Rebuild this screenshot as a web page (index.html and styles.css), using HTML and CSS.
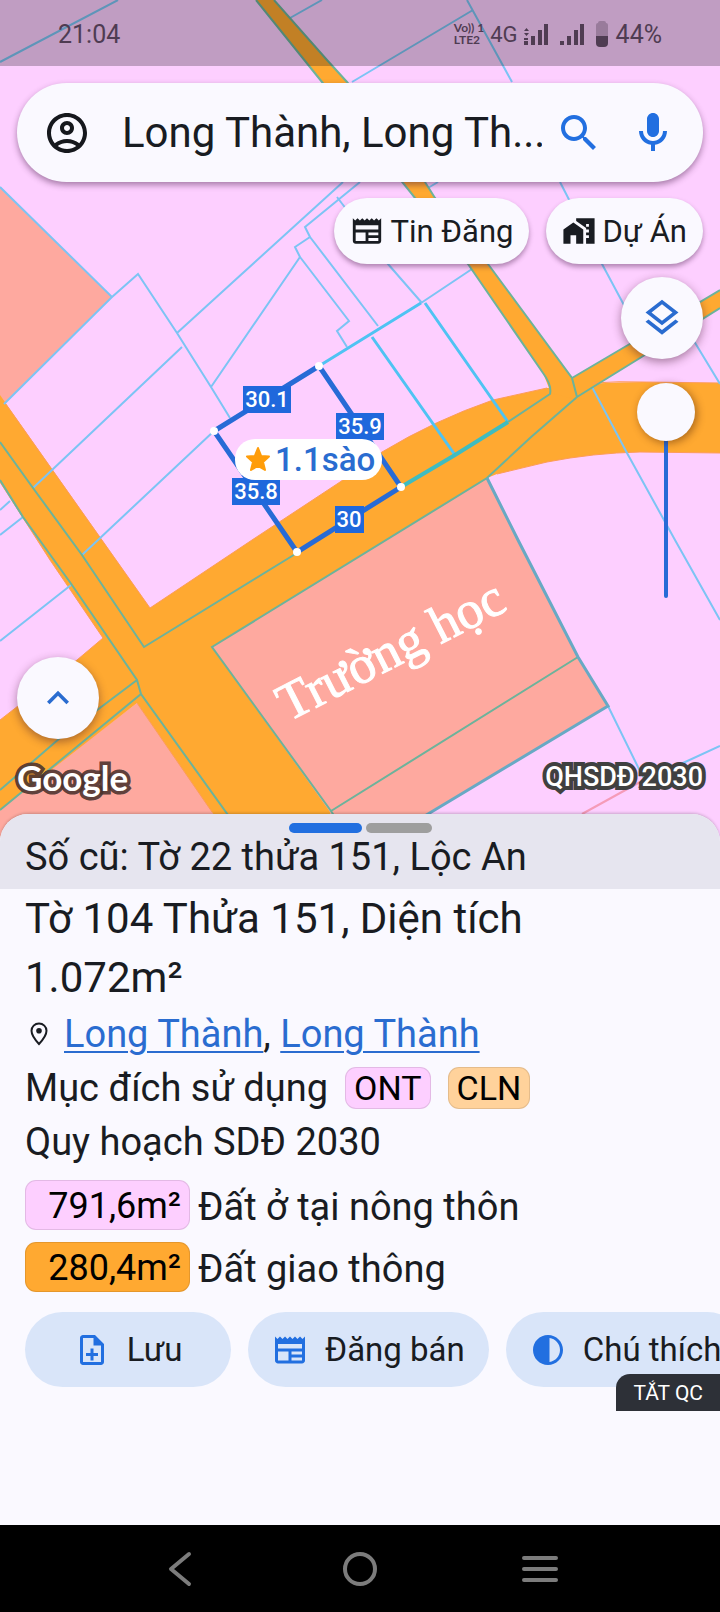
FILE: index.html
```html
<!DOCTYPE html>
<html lang="vi">
<head>
<meta charset="utf-8">
<meta name="viewport" content="width=device-width, initial-scale=1">
<title>Bản đồ quy hoạch</title>
<link rel="stylesheet" href="styles.css">
</head>
<body>
<div class="screen">
  <main class="map">
    <svg class="map-canvas" viewBox="0 0 720 840" preserveAspectRatio="xMidYMin slice" role="img" aria-label="Bản đồ thửa đất">
      <rect class="land" width="720" height="840"/>
      <!-- public land -->
      <path class="public" d="M0 187L112 297L4 404L0 408ZM487 478L212 647L330 814L330 840H380L428 814L608 706L578 657L518 540ZM0 808L137 703L232 840H0Z"/>
      <!-- roads -->
      <path class="road" d="M0 395L150 608L252 540L340 482L382 452Q435 420 493 400L547 388Q593 382 643 382L720 383V453L640 452Q593 453 547 462L497 474L487 478L212 647L330 812V840H230L212 812L137 703L0 810V720L77 660L103 638L50 560L0 482Z"/>
      <path class="road" d="M256 0L322 82L468 264L543 373L551 393L577 400L593 387L640 358L720 308V290L628 345L572 378L488 264L435 198L425 182L347 82L327 60L274 0Z"/>
      <path class="road-edge" d="M5 403L150 608L252 540L340 482L382 452Q435 420 493 400L547 388M593 383Q620 381 643 382L720 383M720 453L640 452Q593 453 547 462L497 474M0 482L50 560L103 638L77 660L0 720M137 703L212 812"/>
      <path class="zone-edge" d="M582 814L640 782"/>
      <!-- parcel boundaries on land -->
      <path class="line" d="M0 62L118 0M290 18L322 0M352 82L473 10M467 0L512 82M560 182L602 264L640 335M680 318L720 384M428 188L438 182"/>
      <path class="line" d="M0 187L112 297L4 404M112 297L138 274L177 333L211 387L230 418M177 333L233 282L343 182M360 182L305 227L310 237L295 247L300 257L211 387M300 257L349 321L337 331L347 347M310 237L378 326M337 197L388 264L422 303M33 488L182 347M82 555L214 431M0 510L10 501M0 535L23 517M0 641L71 585M421 303L472 269"/>
      <path class="line" d="M592 387L627 453L675 540L720 620M608 706L638 767L645 780M645 780L683 763L720 746"/>
      <path class="line bright" d="M319 366L421 303M372 337L455 455M425 303L508 422"/>
      <!-- boundaries over roads -->
      <path class="line teal" d="M256 0L322 82L468 264L543 373Q552 385 550 394L508 422M274 0L327 60L347 82L425 182L435 198L488 264L572 378L577 397M572 378L628 345L720 290M720 308L640 358L593 387L577 397L530 438L487 478L212 647L331 811L578 657M331 811L350 840"/>
      <path class="line steel" d="M487 478L518 540L578 657L608 706L428 814L384 840"/>
      <path class="line teal" d="M0 442L33 488L82 555L144 647L297 553M0 480L23 517L72 585L137 680L141 694L246 840M137 680L60 738L0 790M141 694L0 810"/>
      <path class="line teal thick" d="M401 487L455 455L508 422"/>
      <!-- selected parcel -->
      <path class="parcel" d="M319 366L401 487L297 552L214 431Z"/>
      <g class="node"><circle cx="319" cy="366" r="4"/><circle cx="401" cy="487" r="4"/><circle cx="297" cy="552" r="4"/><circle cx="214" cy="431" r="4"/></g>
      <g class="tag-box"><rect x="243" y="386" width="48" height="27"/><rect x="336" y="413" width="48" height="27"/><rect x="232" y="478" width="48" height="27"/><rect x="335" y="506" width="29" height="27"/></g>
      <g class="tag-text"><text x="267" y="407">30.1</text><text x="360" y="434">35.9</text><text x="256" y="499">35.8</text><text x="349" y="527">30</text></g>
      <rect class="pill" x="235" y="439" width="147" height="41" rx="20"/>
      <path class="star" d="M258 448L261.200 456L269 456.500L263 462L265 470L258 465.800L251 470L253 462L247 456.500L254.800 456Z"/>
      <text class="pill-text" x="275" y="471">1.1sào</text>
      <text class="place" transform="translate(288 722) rotate(-27)">Trường học</text>
    </svg>

    <header class="status">
      <span class="clock">21:04</span>
      <span class="volte"><span>Vo)) 1</span><span>LTE2</span></span>
      <span class="net">4G</span>
      <svg class="signal" viewBox="0 0 24 22" aria-hidden="true"><path d="M0 8L2.500 5L5 8ZM0 10H5L2.500 13ZM0 18h4v4H0ZM7 13h4v9H7ZM14 7h4v15H14ZM20 1h4v21H20ZM0 15h4v2H0Z"/></svg>
      <svg class="signal" viewBox="0 0 24 22" aria-hidden="true"><path d="M0 18h4v4H0ZM7 13h4v9H7ZM14 7h4v15H14ZM20 1h4v21H20Z"/></svg>
      <svg class="battery" viewBox="0 0 12 26" aria-hidden="true"><path opacity=".35" d="M2 2Q2 0 4 0H8Q10 0 10 2Q12 2 12 4V15H0V4Q0 2 2 2Z"/><path d="M0 15H12V22Q12 26 8 26H4Q0 26 0 22Z"/></svg>
      <span class="percent">44%</span>
    </header>

    <div class="controls">
      <form class="search">
        <button class="icon-btn dark" type="button" aria-label="Tài khoản"><svg viewBox="0 0 24 24"><path d="M12 2C6.480 2 2 6.480 2 12s4.480 10 10 10 10-4.480 10-10S17.520 2 12 2zM7.350 18.500C8.660 17.560 10.260 17 12 17s3.340.56 4.650 1.500C15.340 19.440 13.740 20 12 20s-3.340-.56-4.650-1.500zm10.790-1.380C16.450 15.800 14.320 15 12 15s-4.450.8-6.140 2.120C4.700 15.730 4 13.950 4 12c0-4.420 3.580-8 8-8s8 3.580 8 8c0 1.950-.7 3.730-1.860 5.120zM12 6c-1.930 0-3.500 1.570-3.500 3.500S10.070 13 12 13s3.500-1.570 3.500-3.500S13.930 6 12 6zm0 5c-.83 0-1.500-.67-1.500-1.500S11.170 8 12 8s1.500.67 1.500 1.500S12.830 11 12 11z"/></svg></button>
        <input class="search-input" type="text" aria-label="Tìm kiếm" value="Long Thành, Long Th...">
        <button class="icon-btn" type="submit" aria-label="Tìm"><svg viewBox="0 0 24 24"><path d="M15.500 14h-.79l-.28-.27C15.410 12.590 16 11.110 16 9.500 16 5.910 13.090 3 9.500 3S3 5.910 3 9.500 5.910 16 9.500 16c1.610 0 3.090-.59 4.230-1.570l.27.28v.79l5 4.990L20.490 19l-4.990-5zm-6 0C7.010 14 5 11.990 5 9.500S7.010 5 9.500 5 14 7.010 14 9.500 11.990 14 9.500 14z"/></svg></button>
        <button class="icon-btn" type="button" aria-label="Giọng nói"><svg viewBox="0 0 24 24"><path d="M12 14c1.660 0 3-1.340 3-3V5c0-1.660-1.340-3-3-3S9 3.340 9 5v6c0 1.660 1.340 3 3 3zm5-3c0 2.760-2.240 5-5 5s-5-2.240-5-5H5c0 3.530 2.610 6.430 6 6.920V21h2v-3.080c3.390-.49 6-3.390 6-6.920h-2z"/></svg></button>
      </form>
      <div class="chips">
        <button class="chip" type="button"><svg viewBox="0 0 24 24" aria-hidden="true"><path d="M22 3l-1.670 1.670L18.670 3 17 4.670 15.330 3l-1.660 1.670L12 3l-1.670 1.670L8.670 3 7 4.670 5.330 3 3.670 4.670 2 3v16c0 1.100.9 2 2 2h16c1.100 0 2-.9 2-2V3zM11 19H4v-6h7v6zm9 0h-7v-2h7v2zm0-4h-7v-2h7v2zm0-4H4V8h16v3z"/></svg>Tin Đăng</button>
        <button class="chip" type="button"><svg viewBox="0 0 24 24" aria-hidden="true"><path d="M1 11v10h5v-6h4v6h5V11L8 6l-7 5zM10 3v1.970l7 5V11h2v2h-2v2h2v2h-2v4h6V3H10zm9 6h-2V7h2v2z"/></svg>Dự Án</button>
      </div>
      <div class="tools">
        <button class="fab" type="button" aria-label="Lớp bản đồ"><svg viewBox="0 0 24 24"><path d="M11.990 18.540l-7.370-5.730L3 14.070l9 7 9-7-1.630-1.270-7.380 5.740zM12 16l7.360-5.730L21 9l-9-7-9 7 1.630 1.270L12 16zm0-11.470L17.740 9 12 13.470 6.260 9 12 4.530z"/></svg></button>
        <input class="opacity" type="range" min="0" max="100" value="0" aria-label="Độ mờ lớp quy hoạch">
      </div>
      <button class="fab fab-up" type="button" aria-label="Mở rộng"><svg viewBox="0 0 24 24"><path d="M12 8l-6 6 1.410 1.410L12 10.830l4.590 4.580L18 14z"/></svg></button>
      <div class="credits"><span class="google">Google</span><span class="layer-name">QHSDĐ 2030</span></div>
    </div>
  </main>

  <section class="sheet">
    <div class="sheet-head">
      <div class="handles"><span class="handle active"></span><span class="handle"></span></div>
      <p class="old-number">Số cũ: Tờ 22 thửa 151, Lộc An</p>
    </div>
    <div class="sheet-body">
      <h1 class="title">Tờ 104 Thửa 151, Diện tích 1.072m²</h1>
      <p class="row address"><svg class="pin" viewBox="0 0 18 24" aria-hidden="true"><path d="M9 1.500C4.800 1.500 1.500 4.700 1.500 8.800C1.500 14 9 22 9 22S16.500 14 16.500 8.800C16.500 4.700 13.200 1.500 9 1.500Z" fill="none" stroke="currentColor" stroke-width="2"/><circle cx="9" cy="8.800" r="2.800"/></svg><span><a href="#xa">Long Thành</a>, <a href="#huyen">Long Thành</a></span></p>
      <p class="row purpose">Mục đích sử dụng <span class="use ont">ONT</span><span class="use cln">CLN</span></p>
      <p class="row">Quy hoạch SDĐ 2030</p>
      <ul class="areas">
        <li class="area"><span class="amount rural">791,6m²</span><span class="area-name">Đất ở tại nông thôn</span></li>
        <li class="area"><span class="amount traffic">280,4m²</span><span class="area-name">Đất giao thông</span></li>
      </ul>
    </div>
    <div class="actions">
      <button class="action" type="button"><svg viewBox="0 0 24 24" aria-hidden="true"><path d="M14 2H6c-1.100 0-2 .9-2 2v16c0 1.100.9 2 2 2h12c1.100 0 2-.9 2-2V8l-6-6zM18 20H6V4h7v5h5v11zM8 16h3v3h2v-3h3v-2h-3v-3h-2v3H8v2z"/></svg>Lưu</button>
      <button class="action" type="button"><svg viewBox="0 0 24 24" aria-hidden="true"><path d="M22 3l-1.670 1.670L18.670 3 17 4.670 15.330 3l-1.660 1.670L12 3l-1.670 1.670L8.670 3 7 4.670 5.330 3 3.670 4.670 2 3v16c0 1.100.9 2 2 2h16c1.100 0 2-.9 2-2V3zM11 19H4v-6h7v6zm9 0h-7v-2h7v2zm0-4h-7v-2h7v2zm0-4H4V8h16v3z"/></svg>Đăng bán</button>
      <button class="action" type="button"><svg viewBox="0 0 24 24" aria-hidden="true"><path d="M12 22c5.520 0 10-4.480 10-10S17.520 2 12 2 2 6.480 2 12s4.480 10 10 10zm1-17.930c3.940.49 7 3.850 7 7.930s-3.050 7.440-7 7.930V4.070z"/></svg>Chú thích</button>
    </div>
    <button class="ad-off" type="button">TẮT QC</button>
  </section>

  <nav class="sysnav" aria-label="Điều hướng">
    <button type="button" aria-label="Quay lại"><svg viewBox="0 0 40 40"><path d="M29 5L11 20L29 35"/></svg></button>
    <button type="button" aria-label="Trang chủ"><svg viewBox="0 0 40 40"><circle cx="20" cy="20" r="15"/></svg></button>
    <button type="button" aria-label="Gần đây"><svg viewBox="0 0 40 40"><path d="M4 9H36M4 20H36M4 31H36"/></svg></button>
  </nav>
</div>
</body>
</html>
```

FILE: styles.css
```css
* { box-sizing: border-box; }

body {
  margin: 0;
  font-family: Roboto, "Noto Sans", sans-serif;
  color: #191c22;
  background: #faf9ff;
}

button {
  font: inherit;
  color: inherit;
  border: 0;
  padding: 0;
  background: none;
}

p, h1, ul { margin: 0; padding: 0; font-weight: 400; }

svg { fill: currentColor; }

.screen {
  display: flex;
  flex-direction: column;
  min-height: 100vh;
}

/* Map */
.map {
  position: relative;
  flex: 1;
  display: flex;
  flex-direction: column;
  overflow: hidden;
}

.map-canvas {
  position: absolute;
  inset: 0;
  width: 100%;
  height: 100%;
}

.land { fill: #fdcfff; }
.public { fill: #fea99f; }
.road { fill: #ffa931; }
.road-edge { fill: none; stroke: #fd9c58; stroke-width: 1; }
.zone-edge { fill: none; stroke: #f59bb8; stroke-width: 2; }
.line { fill: none; stroke: #7cc4f4; stroke-width: 2; }
.bright { stroke: #4fc3f3; stroke-width: 3; }
.teal { stroke: #6cb39b; }
.steel { stroke: #68a9c4; stroke-width: 3; }
.thick { stroke: #3fbcc0; stroke-width: 4; }
.parcel { fill: none; stroke: #276bd6; stroke-width: 5; }
.node { fill: #fff; }
.tag-box { fill: #1f68dc; }
.tag-text { fill: #fff; font-size: 22px; font-weight: 500; text-anchor: middle; }
.pill { fill: #fff; }
.star { fill: #ff9d0a; stroke: #ff9d0a; stroke-width: 2; stroke-linejoin: round; }
.pill-text { fill: #2a6cd0; font-size: 33px; font-weight: 500; }
.place {
  fill: #fff;
  stroke: #fff;
  stroke-width: 1;
  font-family: "Liberation Serif", serif;
  font-size: 53px;
}

/* Status bar */
.status {
  position: relative;
  display: flex;
  align-items: center;
  gap: 12px;
  height: 66px;
  padding: 2px 58px 0;
  font-size: 25px;
  color: #4f3c52;
  background: rgba(0, 0, 0, 0.24);
}

.clock { margin-right: auto; }
.volte { display: flex; flex-direction: column; margin-right: -6px; font: 700 12px/12px Lato, sans-serif; }
.net { font-size: 22px; margin-right: -6px; }
.signal { width: 24px; height: 22px; }
.battery { width: 12px; height: 26px; }
.percent { margin-left: -4px; }

/* Controls over the map */
.controls {
  position: relative;
  flex: 1;
  display: flex;
  flex-direction: column;
  padding: 17px 17px 33px;
}

.search {
  display: flex;
  align-items: center;
  height: 99px;
  padding: 0 13px;
  border-radius: 50px;
  background: #faf9ff;
  box-shadow: 0 3px 6px rgba(60, 20, 60, 0.45);
}

.icon-btn {
  flex: none;
  display: grid;
  place-items: center;
  width: 74px;
  height: 74px;
  color: #226fe0;
}
.icon-btn svg { width: 48px; height: 48px; }
.dark { color: #16181d; }

.search-input {
  flex: 1;
  min-width: 0;
  margin-left: 18px;
  padding: 0;
  border: 0;
  outline: 0;
  font: 400 42px/60px Roboto, "Noto Sans", sans-serif;
  color: #191c22;
  background: none;
}

.chips {
  display: flex;
  justify-content: flex-end;
  gap: 17px;
  margin-top: 16px;
}

.chip {
  display: flex;
  align-items: center;
  gap: 6px;
  height: 66px;
  padding: 0 16px;
  border-radius: 33px;
  font-size: 31px;
  background: #faf9ff;
  box-shadow: 0 3px 5px rgba(60, 20, 60, 0.4);
}
.chip svg { width: 34px; height: 34px; }

.tools {
  display: flex;
  flex-direction: column;
  align-items: flex-end;
  gap: 24px;
  margin-top: 13px;
}

.fab {
  flex: none;
  display: grid;
  place-items: center;
  width: 82px;
  height: 82px;
  border-radius: 50%;
  color: #2a6cd0;
  background: #faf9ff;
  box-shadow: 0 3px 10px rgba(60, 20, 40, 0.45);
}
.fab svg { width: 44px; height: 44px; }

.opacity {
  writing-mode: vertical-lr;
  appearance: none;
  width: 58px;
  height: 215px;
  margin: 0 8px 0 0;
  background: none;
}
.opacity::-webkit-slider-runnable-track {
  width: 4px;
  height: 100%;
  border-radius: 2px;
  background: #276bd6;
}
.opacity::-webkit-slider-thumb {
  appearance: none;
  width: 58px;
  height: 58px;
  margin-left: -27px;
  border-radius: 50%;
  background: #faf9ff;
  box-shadow: 2px 2px 8px rgba(60, 20, 0, 0.45);
}

.fab-up { margin-top: auto; }

.credits {
  display: flex;
  justify-content: space-between;
  align-items: center;
  height: 42px;
  margin-top: 17px;
  margin-bottom: 7px;
  color: #fff;
  paint-order: stroke fill;
}
.google {
  font-family: Lato, sans-serif;
  font-size: 35px;
  font-weight: 700;
  -webkit-text-stroke: 7px rgba(75, 50, 45, 0.9);
}
.layer-name {
  font-size: 27px;
  font-weight: 500;
  -webkit-text-stroke: 8px #404040;
}

/* Detail sheet */
.sheet {
  position: relative;
  margin-top: -24px;
  padding-bottom: 138px;
  border-radius: 28px 28px 0 0;
  background: #faf9ff;
  box-shadow: 0 -1px 3px rgba(0, 0, 0, 0.2);
}

.sheet-head {
  height: 75px;
  padding-top: 9px;
  border-radius: 28px 28px 0 0;
  background: #e6e5ef;
}

.handles { display: flex; justify-content: center; gap: 4px; }
.handle { width: 66px; height: 10px; border-radius: 5px; background: #9e9e9e; }
.active { width: 73px; background: #226fe0; }

.old-number { padding: 0 25px; font-size: 38px; line-height: 48px; }

.sheet-body { padding: 0 25px; }

.title { max-width: 560px; font-size: 42px; line-height: 59px; }

.row {
  display: flex;
  align-items: center;
  font-size: 38px;
  line-height: 54px;
}

.address { gap: 16px; }
.address a { color: #2a6cd0; text-decoration-thickness: 2px; text-underline-offset: 4px; }
.pin { width: 18px; height: 24px; margin-left: 5px; }

.use {
  height: 42px;
  margin-left: 17px;
  padding: 0 8px;
  border: 1px solid rgba(0, 0, 0, 0.1);
  border-radius: 11px;
  font-size: 34px;
  line-height: 40px;
  color: #000;
}
.ont { background: #fdcfff; }
.cln { background: #ffd29b; }

.areas { display: grid; gap: 12px; margin-top: 11px; list-style: none; }
.area { display: flex; gap: 8px; height: 50px; font-size: 38px; line-height: 50px; }
.area-name { padding-top: 2px; }
.amount {
  width: 165px;
  height: 50px;
  padding-top: 1px;
  padding-right: 8px;
  border: 1px solid rgba(0, 0, 0, 0.1);
  border-radius: 11px;
  font-size: 36px;
  line-height: 48px;
  text-align: right;
  color: #000;
}
.rural { background: #fdcfff; }
.traffic { background: #ffa931; }

.actions {
  display: flex;
  gap: 17px;
  margin-top: 20px;
  padding-left: 25px;
  overflow: hidden;
}

.action {
  flex: none;
  display: flex;
  align-items: center;
  justify-content: center;
  gap: 17px;
  min-width: 206px;
  height: 75px;
  padding: 0 24px;
  border-radius: 38px;
  font-size: 33px;
  background: #d9e5f9;
}
.action svg { width: 36px; height: 36px; color: #226fe0; }

.ad-off {
  position: absolute;
  right: 0;
  bottom: 114px;
  height: 37px;
  padding: 0 17px;
  border-radius: 14px 0 0 0;
  font-size: 21px;
  color: #fff;
  background: #2d3037;
}

/* System navigation */
.sysnav {
  display: flex;
  justify-content: center;
  gap: 140px;
  height: 87px;
  background: #000;
}
.sysnav svg {
  display: block;
  width: 40px;
  height: 40px;
  fill: none;
  stroke: #7c7c7c;
  stroke-width: 4;
  stroke-linecap: round;
  stroke-linejoin: round;
}
```
